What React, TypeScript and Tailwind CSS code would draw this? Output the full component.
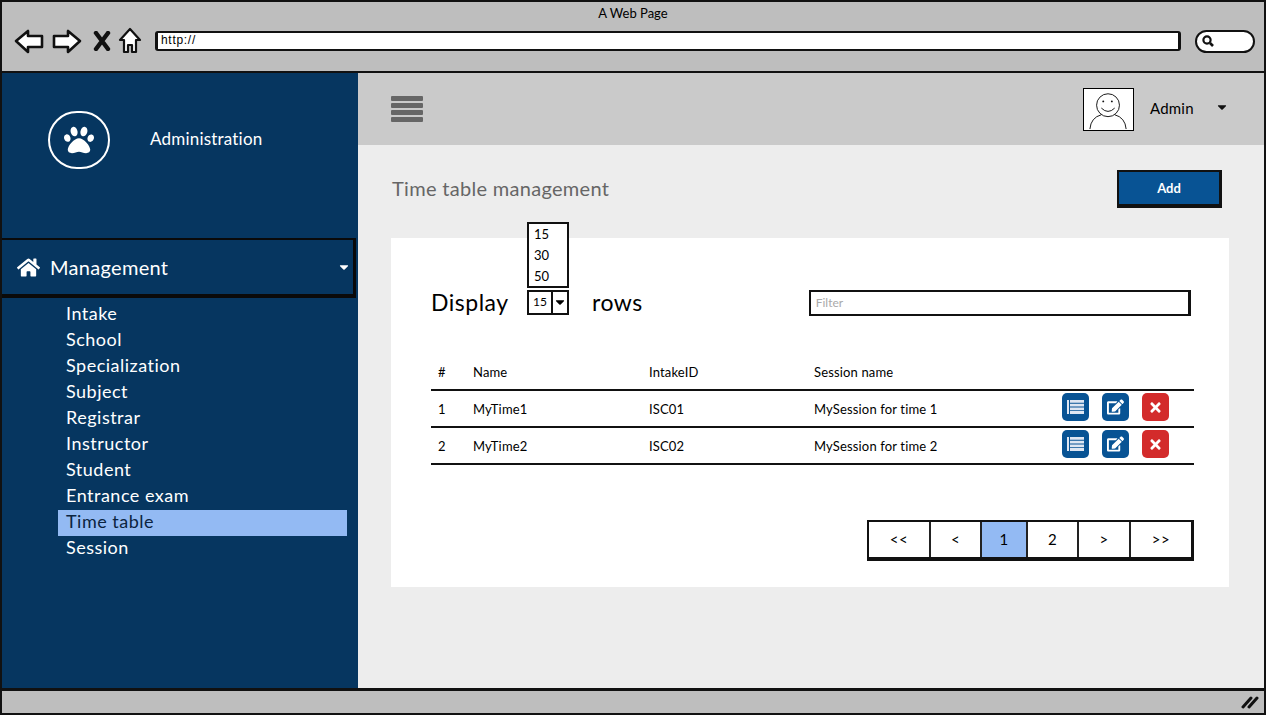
import { FaCaretDown, FaEdit, FaHome, FaPaw, FaTimes } from 'react-icons/fa';

const MENU = ['Intake', 'School', 'Specialization', 'Subject', 'Registrar', 'Instructor', 'Student', 'Entrance exam', 'Time table', 'Session'];

const ROWS = [
  { id: 1, name: 'MyTime1', intake: 'ISC01', session: 'MySession for time 1' },
  { id: 2, name: 'MyTime2', intake: 'ISC02', session: 'MySession for time 2' },
];

const PAGES = [
  { label: '<<', width: 'w-[60px]' },
  { label: '<', width: 'w-[51px]' },
  { label: '1', width: 'w-[46px]', active: true },
  { label: '2', width: 'w-[51px]' },
  { label: '>', width: 'w-[52px]' },
  { label: '>>', width: 'w-[62px]' },
];

function BrowserBar() {
  return (
    <div className="h-[71px] shrink-0 border-b-[2px] border-[#111] bg-[#bebebe]">
      <div className="h-[22px] pt-[3px] text-center text-[13px] leading-[16px] text-black">A Web Page</div>
      <div className="mt-[3px] flex items-center pl-[12px]">
        <svg width="30" height="26" viewBox="0 0 30 26" className="shrink-0">
          <path d="M2 13 L14 3 L14 8 L28 8 L28 19 L14 19 L14 24 Z" fill="#fff" stroke="#111" strokeWidth="2.6" strokeLinejoin="round" />
        </svg>
        <svg width="30" height="26" viewBox="0 0 30 26" className="ml-[8px] shrink-0">
          <path d="M28 13 L16 3 L16 8 L2 8 L2 19 L16 19 L16 24 Z" fill="#fff" stroke="#111" strokeWidth="2.6" strokeLinejoin="round" />
        </svg>
        <svg width="18" height="20" viewBox="0 0 18 20" className="ml-[11px] shrink-0">
          <path d="M3 2 L15 18 M15 2 L3 18" stroke="#111" strokeWidth="4.4" strokeLinecap="round" />
        </svg>
        <svg width="24" height="28" viewBox="0 0 24 28" className="ml-[7px] shrink-0">
          <path d="M12 2 L22 13 L18 13 L18 25 L14 25 L14 18 L10 18 L10 25 L6 25 L6 13 L2 13 Z" fill="#fff" stroke="#111" strokeWidth="2.2" strokeLinejoin="round" />
        </svg>
        <div className="ml-[13px] h-[20px] w-[1026px] rounded-[3px] border-x-[3px] border-y-[2px] border-[#111] bg-white pl-[3px] font-['Liberation_Sans',sans-serif] text-[12px] leading-[15px] tracking-[0.7px] text-black">
          http://
        </div>
        <div className="ml-[14px] flex h-[23px] w-[60px] items-center rounded-[12px] border-[2px] border-[#111] bg-white pl-[4px]">
          <svg width="14" height="14" viewBox="0 0 14 14">
            <circle cx="6" cy="6" r="3.6" fill="none" stroke="#111" strokeWidth="2.2" />
            <path d="M9 9 L12 12" stroke="#111" strokeWidth="2.6" />
          </svg>
        </div>
      </div>
    </div>
  );
}

function Sidebar() {
  return (
    <aside className="w-[356px] shrink-0 bg-[#063660] text-white">
      <div className="flex h-[165px] items-start pl-[46px] pt-[38px]">
        <div className="flex h-[58px] w-[62px] items-center justify-center rounded-full border-2 border-white">
          <FaPaw className="h-[30px] w-[30px]" />
        </div>
        <div className="ml-[40px] mt-[17px] text-[17px] leading-[22px] tracking-[0.2px]">Administration</div>
      </div>
      <div className="flex h-[60px] w-[354px] items-center border-b-[4px] border-r-[3px] border-t-[2px] border-[#0a0a0a] pl-[15px] pr-[3px]">
        <FaHome className="h-[23px] w-[23px]" />
        <span className="ml-[10px] text-[20px] leading-[26px] tracking-[0.3px]">Management</span>
        <FaCaretDown className="ml-auto h-[14px] w-[12px]" />
      </div>
      <ul className="mt-[4px] pl-[56px] pr-[11px]">
        {MENU.map((item) => (
          <li
            key={item}
            className={`h-[26px] pl-[8px] text-[18px] leading-[22px] tracking-[0.5px] ${item === 'Time table' ? 'bg-[#93baf3] text-[#0b2440]' : ''}`}
          >
            {item}
          </li>
        ))}
      </ul>
    </aside>
  );
}

function ActionButton({ color, children }: { color: string; children: React.ReactNode }) {
  return <button className={`flex h-[28px] w-[27px] items-center justify-center rounded-[5px] text-white ${color}`}>{children}</button>;
}

function ListIcon() {
  return (
    <svg width="17" height="14" viewBox="0 0 17 14">
      <path d="M0 0 H2 V14 H0 Z M3 0 H17 V2.8 H3 Z M3 3.7 H17 V6.5 H3 Z M3 7.4 H17 V10.2 H3 Z M3 11.1 H17 V14 H3 Z" fill="#dfe6f2" />
    </svg>
  );
}

function RowsTable() {
  return (
    <div className="-mr-[5px] mt-[42px] text-[13px] tracking-[0.15px] text-black">
      <div className="flex h-[34px] items-center border-b-[2px] border-[#111] pb-[2px] pl-[7px] leading-[16px]">
        <span className="w-[35px]">#</span>
        <span className="w-[176px]">Name</span>
        <span className="w-[165px]">IntakeID</span>
        <span>Session name</span>
      </div>
      {ROWS.map((row) => (
        <div key={row.id} className="flex h-[37px] items-center border-b-[2px] border-[#111] pl-[7px] pt-[2px]">
          <span className="w-[35px]">{row.id}</span>
          <span className="w-[176px]">{row.name}</span>
          <span className="w-[165px]">{row.intake}</span>
          <span className="w-[248px]">{row.session}</span>
          <div className="flex gap-[13px] pb-[5px]">
            <ActionButton color="bg-[#085394]"><ListIcon /></ActionButton>
            <ActionButton color="bg-[#085394]"><FaEdit className="h-[16px] w-[17px]" /></ActionButton>
            <ActionButton color="bg-[#d32b2b]"><FaTimes className="h-[15px] w-[15px]" /></ActionButton>
          </div>
        </div>
      ))}
    </div>
  );
}

function Pagination() {
  return (
    <div className="-mr-[5px] mt-[55px] flex justify-end">
      <div className="flex h-[41px] border-b-[4px] border-l-[2px] border-r-[3px] border-t-[2px] border-[#111] bg-white text-[15px] tracking-[0.5px] text-black">
        {PAGES.map((page, i) => (
          <div
            key={page.label}
            className={`flex items-center justify-center ${page.width} ${i > 0 ? 'border-l-[2px] border-[#222]' : ''} ${page.active ? 'bg-[#93baf3]' : ''}`}
          >
            {page.label}
          </div>
        ))}
      </div>
    </div>
  );
}

function Content() {
  return (
    <main className="flex min-w-0 flex-1 flex-col bg-[#ededed]">
      <div className="flex h-[72px] shrink-0 items-center bg-[#cacaca] pl-[33px] pr-[36px]">
        <div className="flex w-[32px] flex-col gap-[2px]">
          <div className="h-[5px] rounded-[1px] bg-[#666]" />
          <div className="h-[5px] rounded-[1px] bg-[#666]" />
          <div className="h-[5px] rounded-[1px] bg-[#666]" />
          <div className="h-[5px] rounded-[1px] bg-[#666]" />
        </div>
        <svg width="51" height="43" viewBox="0 0 51 43" className="ml-auto border border-black bg-white">
          <circle cx="25" cy="17" r="12" fill="#fff" stroke="#111" />
          <circle cx="20" cy="13" r="1" fill="#111" />
          <circle cx="29" cy="13" r="1" fill="#111" />
          <path d="M18 20 Q25 27 32 20" fill="none" stroke="#111" />
          <path d="M6 42 Q7 30 18 27 M32 27 Q43 30 44 42" fill="none" stroke="#111" />
        </svg>
        <span className="mb-[2px] ml-[16px] w-[66px] text-[15px] tracking-[0.2px] text-black">Admin</span>
        <FaCaretDown className="mb-[4px] h-[14px] w-[12px] text-[#111]" />
      </div>

      <div className="flex h-[93px] shrink-0 items-center justify-between pl-[34px] pr-[42px]">
        <h1 className="mb-[8px] text-[20px] font-normal tracking-[0.3px] text-[#666]">Time table management</h1>
        <button className="mb-[6px] h-[38px] w-[105px] border-b-[4px] border-l-[2px] border-r-[3px] border-t-[2px] border-[#111] bg-[#085394] pt-[2px] text-[13px] font-bold text-white">Add</button>
      </div>

      <section className="mx-[33px] h-[349px] w-[838px] bg-white px-[40px] pt-[51px]">
        <div className="flex h-[26px] items-center">
          <span className="w-[96px] shrink-0 text-[23px] tracking-[0.5px] text-black">Display</span>
          <div className="relative flex h-[25px] w-[42px] shrink-0 border-[2px] border-[#111] text-[12px] text-black">
            <div className="flex w-[24px] items-center justify-center border-r-[2px] border-[#111]">15</div>
            <div className="flex flex-1 items-center justify-center"><FaCaretDown className="h-[14px] w-[12px]" /></div>
            <div className="absolute -left-[2px] bottom-[25px] flex h-[66px] w-[42px] flex-col justify-center gap-[5px] border-[2px] border-[#111] bg-white pl-[5px] text-[13px] leading-[16px]">
              <span>15</span>
              <span>30</span>
              <span>50</span>
            </div>
          </div>
          <span className="ml-[23px] shrink-0 text-[23px] tracking-[0.5px] text-black">rows</span>
          <div className="ml-[166px] mt-[2px] flex h-[26px] w-[382px] shrink-0 items-center border-b-[2px] border-l-[2px] border-r-[3px] border-t-[2px] border-[#111] pl-[5px] text-[12px] text-[#aaa]">Filter</div>
        </div>
        <RowsTable />
        <Pagination />
      </section>
    </main>
  );
}

export default function App() {
  return (
    <div className="h-[716px] w-[1269px] overflow-hidden bg-white font-['Lato',sans-serif]">
      <div className="flex h-[715px] w-[1266px] flex-col border-[2px] border-[#111]">
        <BrowserBar />
        <div className="flex min-h-0 flex-1">
          <Sidebar />
          <Content />
        </div>
        <div className="flex h-[25px] shrink-0 items-center justify-end border-t-[3px] border-[#111] bg-[#bebebe] pr-[5px]">
          <svg width="18" height="14" viewBox="0 0 18 14">
            <path d="M2 12 L10 3 M8 12 L16 3" stroke="#111" strokeWidth="3" strokeLinecap="round" />
          </svg>
        </div>
      </div>
    </div>
  );
}
